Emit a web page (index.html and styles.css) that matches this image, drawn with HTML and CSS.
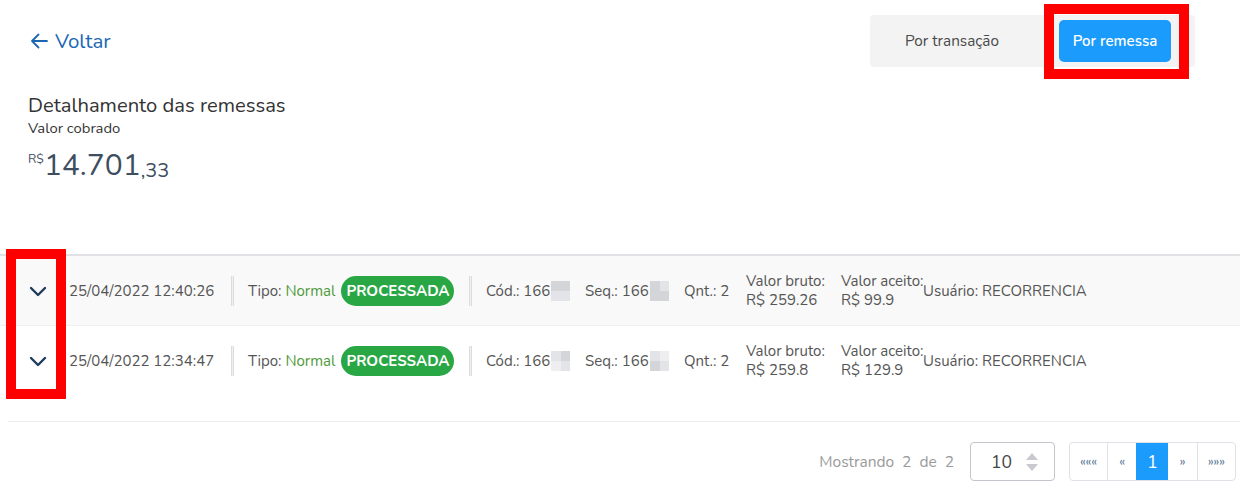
FILE: index.html
```html
<!DOCTYPE html>
<html lang="pt-BR">
<head>
<meta charset="utf-8">
<title>Detalhamento das remessas</title>
<link rel="stylesheet" href="styles.css">
</head>
<body>
<div class="page">
  <header class="top">
    <a class="back" href="#">
      <svg class="back-icon" width="18" height="16" viewBox="0 0 18 16"><path d="M17 8H2M8.5 1.5L2 8l6.5 6.5" fill="none" stroke="currentColor" stroke-width="1.8" stroke-linecap="round" stroke-linejoin="round"/></svg>
      <span>Voltar</span>
    </a>
    <div class="segment">
      <button class="seg-btn">Por transação</button>
      <button class="seg-btn active">Por remessa</button>
    </div>
  </header>

  <section class="summary">
    <h1 class="title">Detalhamento das remessas</h1>
    <div class="subtitle">Valor cobrado</div>
    <div class="amount"><span class="cur">R$</span><span class="int">14.701</span><span class="dec">,33</span></div>
  </section>

  <div class="table">
    <div class="row alt">
      <div class="c-exp"><svg width="18" height="11" viewBox="0 0 18 11"><path d="M2 2l7 7 7-7" fill="none" stroke="#1f3a5c" stroke-width="2.4" stroke-linecap="round" stroke-linejoin="round"/></svg></div>
      <div class="c-date">25/04/2022 12:40:26</div>
      <div class="sep"></div>
      <div class="c-tipo">Tipo: <span class="green">Normal</span><span class="badge">PROCESSADA</span></div>
      <div class="sep"></div>
      <div class="c-cod">Cód.: 166<span class="blur"><i></i><i></i><i class="l"></i><i class="l"></i></span></div>
      <div class="c-seq">Seq.: 166<span class="blur"><i></i><i class="l"></i><i></i><i></i></span></div>
      <div class="c-qnt">Qnt.: 2</div>
      <div class="c-bruto">Valor bruto:<br>R$ 259.26</div>
      <div class="c-aceito">Valor aceito:<br>R$ 99.9</div>
      <div class="c-user">Usuário: RECORRENCIA</div>
    </div>
    <div class="row">
      <div class="c-exp"><svg width="18" height="11" viewBox="0 0 18 11"><path d="M2 2l7 7 7-7" fill="none" stroke="#1f3a5c" stroke-width="2.4" stroke-linecap="round" stroke-linejoin="round"/></svg></div>
      <div class="c-date">25/04/2022 12:34:47</div>
      <div class="sep"></div>
      <div class="c-tipo">Tipo: <span class="green">Normal</span><span class="badge">PROCESSADA</span></div>
      <div class="sep"></div>
      <div class="c-cod">Cód.: 166<span class="blur"><i class="l"></i><i></i><i class="xl"></i><i class="l"></i></span></div>
      <div class="c-seq">Seq.: 166<span class="blur"><i class="l"></i><i class="xl"></i><i></i><i class="l"></i></span></div>
      <div class="c-qnt">Qnt.: 2</div>
      <div class="c-bruto">Valor bruto:<br>R$ 259.8</div>
      <div class="c-aceito">Valor aceito:<br>R$ 129.9</div>
      <div class="c-user">Usuário: RECORRENCIA</div>
    </div>
  </div>

  <footer class="foot">
    <span class="showing">Mostrando 2 de 2</span>
    <div class="select"><span>10</span>
      <svg width="16" height="22" viewBox="0 0 16 22"><path d="M2 9L8 2l6 7z" fill="#c9c9cf"/><path d="M2 13l6 7 6-7z" fill="#c9c9cf"/></svg>
    </div>
    <nav class="pager">
      <a class="pg">«««</a>
      <a class="pg">«</a>
      <a class="pg active">1</a>
      <a class="pg">»</a>
      <a class="pg">»»»</a>
    </nav>
  </footer>

  <div class="mark mark-top"></div>
  <div class="mark mark-left"></div>
</div>
</body>
</html>
```

FILE: styles.css
```css
* { box-sizing: border-box; }
html, body { margin: 0; padding: 0; background: #fff; }
body {
  font-family: "Nunito", "Open Sans", "Noto Sans", sans-serif;
  color: #555;
}
.page { position: relative; width: 1240px; height: 488px; overflow: hidden; }

.top {
  display: flex;
  justify-content: space-between;
  align-items: center;
  padding: 15px 45px 0 30px;
  height: 67px;
}
.back {
  display: flex;
  align-items: center;
  gap: 7px;
  color: #1b67b4;
  text-decoration: none;
  font-size: 20.5px;
  margin-top: -1px;
}
.back-icon { display: block; }
.segment {
  display: flex;
  gap: 51px;
  align-items: center;
  background: #f3f3f3;
  border-radius: 4px;
  height: 52px;
  padding: 0 24px 0 26px;
}
.seg-btn {
  font-family: inherit;
  font-size: 15.3px;
  border: 0;
  background: transparent;
  color: #4a4a4a;
  width: 112px;
  height: 42px;
  border-radius: 5px;
  padding: 0;
  white-space: nowrap;
}
.seg-btn.active {
  background: #1b9bfc;
  color: #fff;
  font-weight: 600;
  font-size: 15px;
}

.summary { padding: 26px 0 0 28px; height: 187px; }
.title {
  margin: 0;
  font-size: 20.2px;
  font-weight: 400;
  color: #333;
  line-height: 26px;
}
.subtitle { font-size: 14.8px; color: #333; line-height: 19px; margin-top: 0; }
.amount { color: #3e4e5e; margin-top: 8px; display: flex; align-items: flex-start; }
.amount .cur { font-size: 12.5px; line-height: 16px; margin-top: 5px; }
.amount .int { font-size: 30px; line-height: 40px; }
.amount .dec { font-size: 20px; line-height: 20px; margin-top: 15px; }

.table { border-top: 2px solid #dfe1e5; }
.row {
  display: flex;
  align-items: center;
  height: 70px;
  font-size: 15px;
  color: #555;
  white-space: nowrap;
  border-bottom: 1px solid #efefef;
  background: #fff;
}
.row:last-child { border-bottom-color: transparent; }
.row.alt { background: #f9f9f9; }
.row > div { flex: none; }
.c-exp { width: 69px; padding-left: 29px; display: flex; align-items: center; padding-top: 2px; }
.c-date { width: 162px; }
.sep {
  width: 3px;
  height: 30px;
  border-left: 1px solid #dcdcdc;
  border-right: 1px solid #dcdcdc;
  background: #f0f0f0;
}
.c-tipo { width: 235px; padding-left: 14px; display: flex; align-items: center; }
.green { color: #4f9a3a; margin-left: 4px; }
.badge {
  margin-left: 6px;
  background: #2aa745;
  color: #fff;
  font-weight: 700;
  font-size: 15px;
  height: 30px;
  line-height: 30px;
  padding: 0;
  border-radius: 15px;
  width: 113px;
  text-align: center;
}
.c-cod { width: 113px; padding-left: 14px; display: flex; align-items: center; }
.c-seq { width: 99px; display: flex; align-items: center; }
.blur {
  display: grid;
  grid-template-columns: 10px 9px;
  grid-template-rows: 10px 10px;
  margin-left: 1px;
}
.blur i { background: #d4d5d9; }
.blur i.l { background: #e3e4e7; }
.blur i.xl { background: #eeeef0; }
.c-qnt { width: 62px; }
.c-bruto { width: 95px; line-height: 19px; }
.c-aceito { width: 82px; line-height: 19px; }
.c-user { }

.foot {
  margin: 25px 0 0 8px;
  border-top: 1px solid #ececec;
  display: flex;
  justify-content: flex-end;
  align-items: center;
  padding: 20px 4px 0 0;
}
.showing { color: #9a9a9a; font-size: 15.5px; word-spacing: 4px; margin-right: 16px; }
.select {
  width: 85px;
  height: 39px;
  border: 1px solid #c4c4cc;
  border-radius: 4px;
  display: flex;
  align-items: center;
  padding: 0 14px 0 20px;
  justify-content: space-between;
  font-size: 17.5px;
  color: #444;
  margin-right: 16px;
}
.select svg { display: block; }
.pager {
  display: flex;
  height: 39px;
  border: 1px solid #dee2e6;
  border-radius: 4px;
  overflow: hidden;
}
.pg {
  display: flex;
  align-items: center;
  justify-content: center;
  color: #5a7896;
  font-size: 13px;
  border-left: 1px solid #dee2e6;
  padding: 0;
}
.pg:first-child { border-left: 0; width: 37px; }
.pg:nth-child(2) { width: 29px; }
.pg.active { background: #1b9bfc; color: #fff; font-size: 18px; width: 32px; border-left-color: #1b9bfc; }
.pg:nth-child(4) { width: 29px; border-left: 0; }
.pg:last-child { width: 38px; }
.pager { margin-left: -2px; }
.select { margin-right: 16px; }

.mark { position: absolute; border: 10px solid #ff0000; pointer-events: none; }
.mark-top { left: 1044px; top: 4px; width: 145px; height: 75px; }
.mark-left { left: 6px; top: 249px; width: 60px; height: 150px; }
```
